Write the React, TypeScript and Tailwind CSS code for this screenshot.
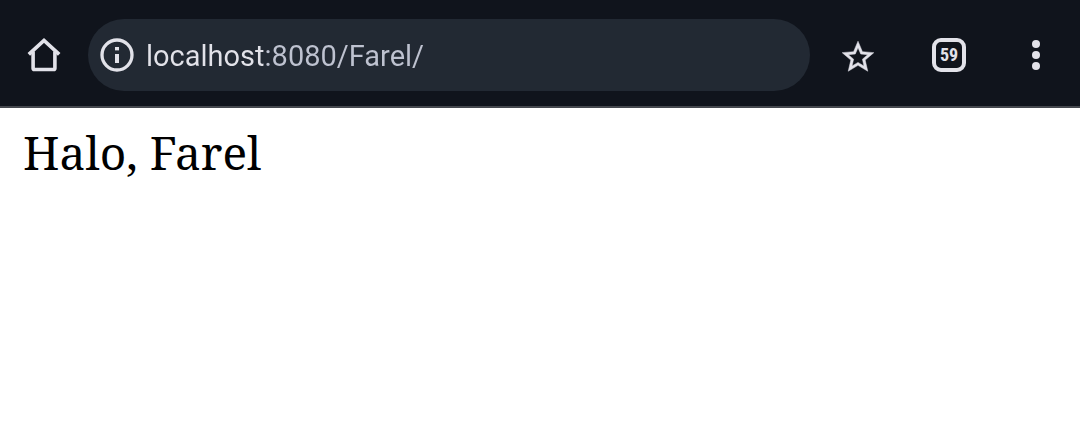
import { useState } from "react";

function HomeIcon() {
  return (
    <svg width="36" height="36" viewBox="0 0 36 36" fill="none" stroke="currentColor" aria-hidden="true">
      <path d="M2.8 17.4 L18 3.4 L33.2 17.4" strokeWidth="3.7" strokeLinejoin="miter" />
      <path d="M7.1 14.5 V31.2 Q7.1 32.5 8.4 32.5 H27.6 Q28.9 32.5 28.9 31.2 V14.5" strokeWidth="3.6" />
    </svg>
  );
}

function InfoIcon() {
  return (
    <svg width="34" height="34" viewBox="0 0 34 34" aria-hidden="true">
      <circle cx="17" cy="17" r="15" fill="none" stroke="currentColor" strokeWidth="3.3" />
      <rect x="15" y="9" width="4" height="3.4" fill="currentColor" />
      <rect x="15" y="16" width="4" height="9" fill="currentColor" />
    </svg>
  );
}

function StarIcon() {
  return (
    <svg width="38" height="38" viewBox="0 0 24 24" fill="currentColor" stroke="currentColor" strokeWidth="0.3" aria-hidden="true">
      <path d="M22 9.24l-7.19-.62L12 2 9.19 8.63 2 9.24l5.46 4.73L5.82 21 12 17.27 18.18 21l-1.63-7.03L22 9.24zM12 15.4l-3.76 2.27 1-4.28-3.32-2.88 4.38-.38L12 6.1l1.71 4.04 4.38.38-3.32 2.88 1 4.28L12 15.4z" />
    </svg>
  );
}

function MenuIcon() {
  return (
    <svg width="10" height="32" viewBox="0 0 10 32" fill="currentColor" aria-hidden="true">
      <circle cx="5" cy="5" r="4" />
      <circle cx="5" cy="16" r="4" />
      <circle cx="5" cy="27" r="4" />
    </svg>
  );
}

export default function App() {
  const [url, setUrl] = useState("localhost:8080/Farel/");

  return (
    <div className="min-h-screen bg-white">
      <header className="flex items-center border-b-2 border-[#45484e] bg-[#10141c] pt-[19px] pb-[15px] font-['Roboto',sans-serif] text-[#e2e2e9]">
        <button type="button" aria-label="Home" className="flex h-[72px] w-[88px] items-center justify-center">
          <HomeIcon />
        </button>
        <div className="flex h-[72px] min-w-0 flex-1 items-center gap-3 rounded-full bg-[#222933] px-3">
          <button type="button" aria-label="Site information" className="shrink-0">
            <InfoIcon />
          </button>
          {/* The host is drawn brighter than the port and path that follow it. */}
          <input
            type="text"
            aria-label="Address"
            value={url}
            onChange={(event) => setUrl(event.target.value)}
            className="min-w-0 flex-1 bg-[linear-gradient(to_right,#e2e2e9_119px,#bec2d0_119px)] bg-clip-text pt-0.5 text-[29px] leading-10 text-transparent caret-white outline-none"
          />
        </div>
        <button type="button" aria-label="Bookmark" className="flex h-[72px] w-24 items-center justify-center pt-1">
          <StarIcon />
        </button>
        <button type="button" aria-label="59 open tabs" className="flex h-[72px] w-[86px] items-center justify-center">
          <span className="flex size-[34px] items-center justify-center rounded-[9px] border-4 border-current font-['Roboto_Condensed','Roboto',sans-serif] text-[18px] leading-none font-bold">
            59
          </span>
        </button>
        <button type="button" aria-label="Menu" className="flex h-[72px] w-[88px] items-center justify-center">
          <MenuIcon />
        </button>
      </header>
      <main className="px-[23px] py-4 font-['Noto_Serif','Liberation_Serif',serif] text-[46px] leading-[56px] text-black">
        <p>Halo, Farel</p>
      </main>
    </div>
  );
}
